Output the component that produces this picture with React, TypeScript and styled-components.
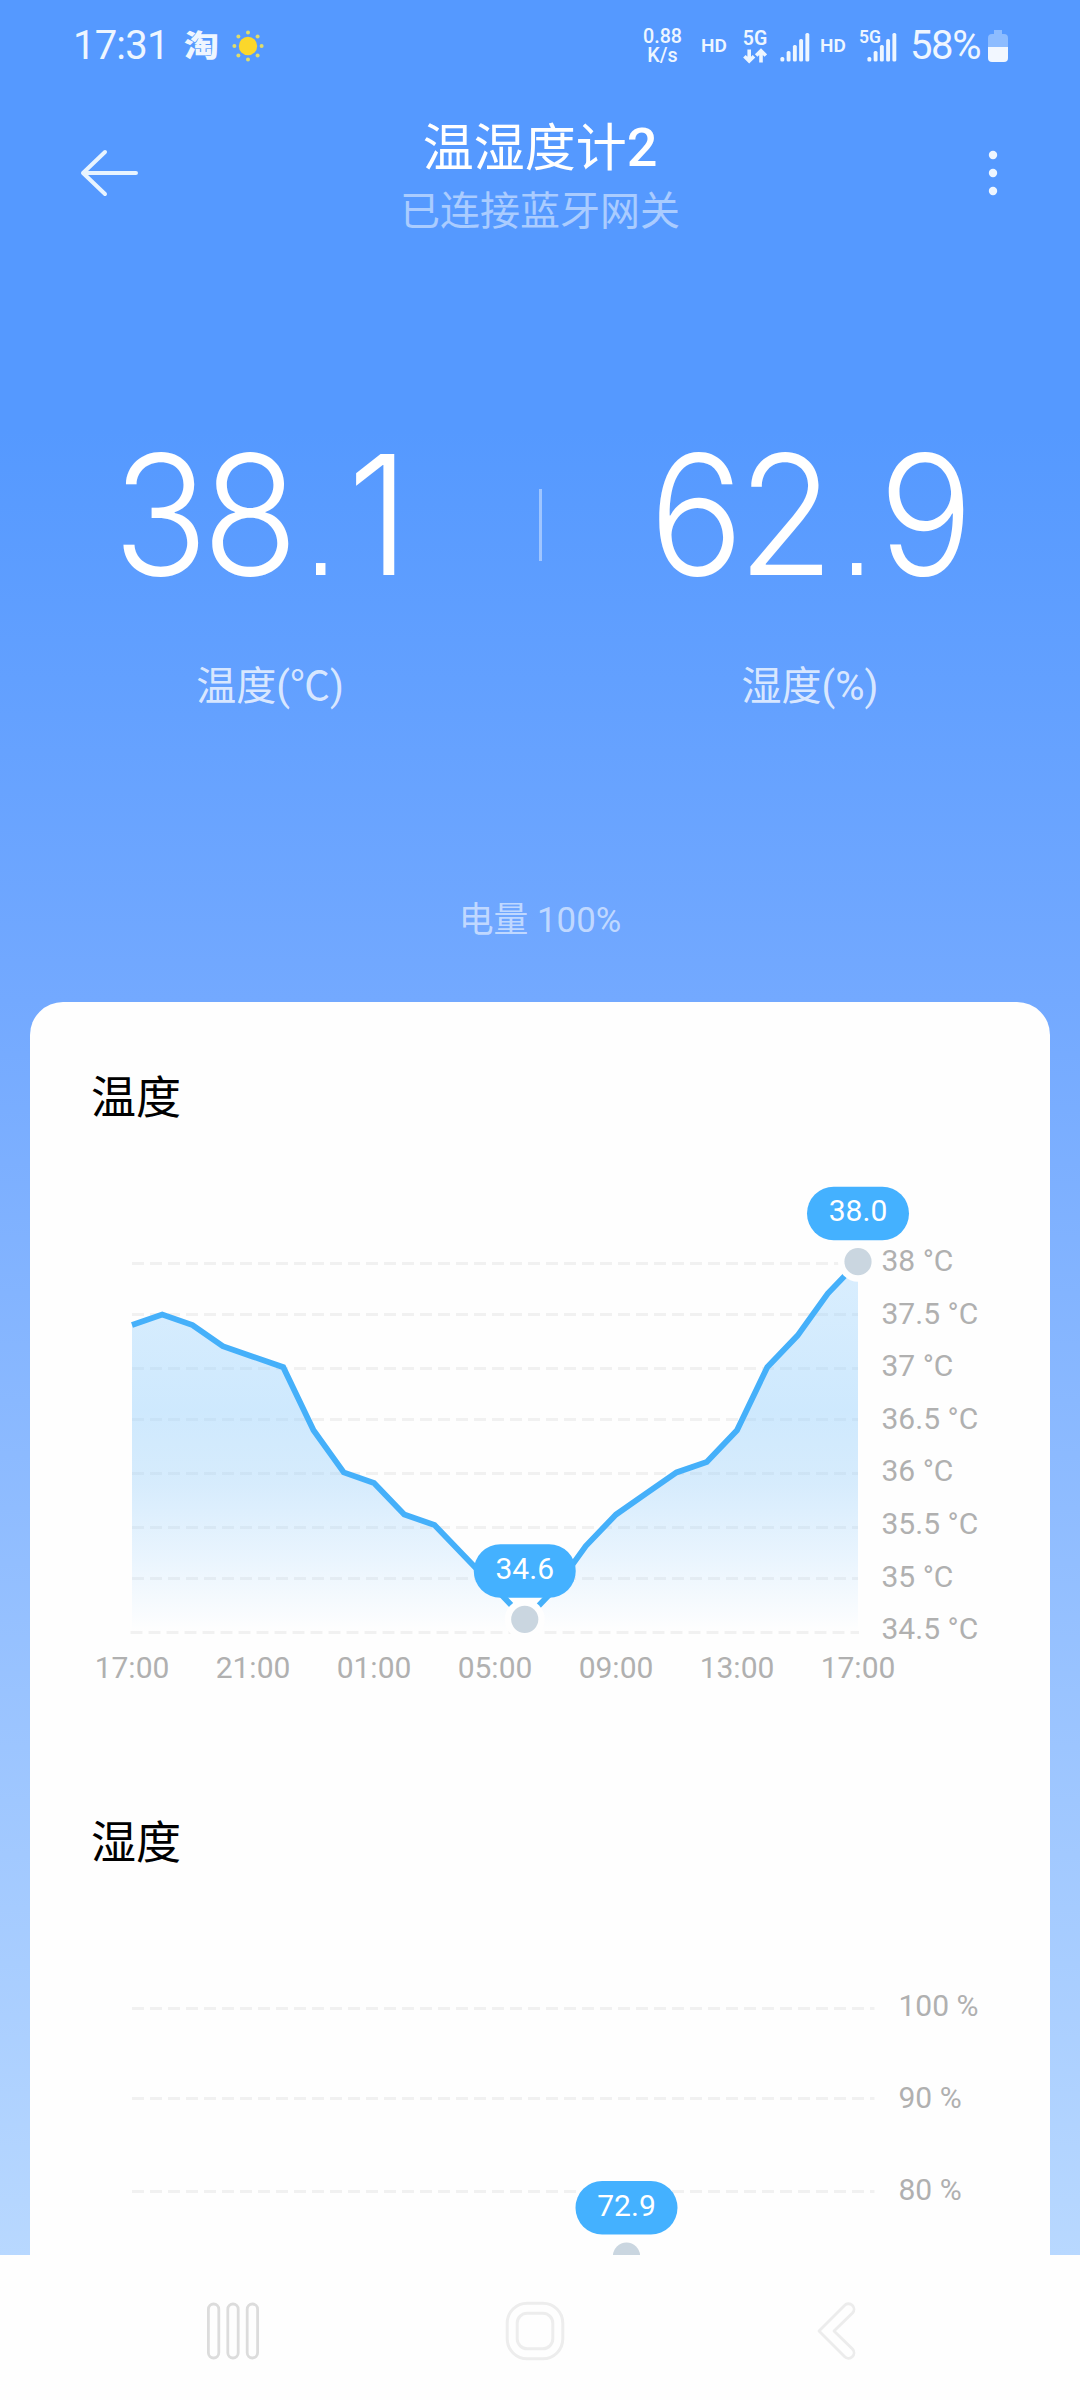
import React from "react";
import styled, { createGlobalStyle } from "styled-components";

const FONT = `Roboto, "Noto Sans CJK SC", sans-serif`;

const GlobalStyle = createGlobalStyle`
  * { box-sizing: border-box; }
  body { margin: 0; background: #fefefe; font-family: ${FONT}; }
`;

const Phone = styled.div`
  width: 1080px;
  height: 2400px;
  display: flex;
  flex-direction: column;
  overflow: hidden;
`;

const Screen = styled.main`
  flex: 1;
  min-height: 0;
  display: flex;
  flex-direction: column;
  background: linear-gradient(180deg, #5599ff 0, #5599ff 430px, #73a9ff 1000px, #b8d8ff 2255px);
`;

/* ---------- status bar ---------- */

const StatusBar = styled.header`
  height: 90px;
  padding: 2px 72px 0 73px;
  display: flex;
  align-items: center;
  justify-content: space-between;
  color: #eef6ff;
`;

const StatusGroup = styled.div`
  display: flex;
  align-items: center;
`;

const Clock = styled.span`
  width: 109px;
  font-size: 40px;
  line-height: 48px;
  letter-spacing: -0.8px;
`;

const ShopGlyph = styled.span`
  width: 36px;
  margin: 0 12px 0 2px;
  font-size: 30px;
  line-height: 36px;
  font-weight: 900;
  transform: scaleX(1.16);
  transform-origin: left center;
`;

const Tiny = styled.span<{ $w: number; $gap: number; $size?: number }>`
  width: ${(p) => p.$w}px;
  margin-right: ${(p) => p.$gap}px;
  font-size: ${(p) => p.$size ?? 19}px;
  line-height: 22px;
  font-weight: 600;
  white-space: nowrap;
`;

const NetSpeed = styled.span`
  width: 42px;
  margin-right: 17.5px;
  padding-top: 1px;
  display: flex;
  flex-direction: column;
  align-items: center;
  font-size: 19.7px;
  line-height: 18.7px;
  font-weight: 500;
`;

const DataLink = styled.span`
  width: 26px;
  margin-right: 12px;
  display: flex;
  flex-direction: column;
  align-items: center;
  font-size: 19.5px;
  line-height: 19px;
  font-weight: 600;
`;

const SignalWrap = styled.span<{ $gap: number }>`
  display: flex;
  margin-right: ${(p) => p.$gap}px;
`;

const SmallNet = styled.span`
  align-self: flex-start;
  width: 21px;
  margin-right: -13px;
  font-size: 17.5px;
  line-height: 15px;
  font-weight: 600;
`;

const Percent = styled.span`
  width: 78px;
  font-size: 40px;
  line-height: 48px;
  letter-spacing: -1.4px;
`;

/* ---------- title bar ---------- */

const TitleBar = styled.div`
  height: 166px;
  padding: 0 76px;
  display: flex;
  align-items: center;
  justify-content: space-between;
`;

const IconButton = styled.button<{ $nudge?: number }>`
  margin: 0 ${(p) => p.$nudge ?? 0}px 0 0;
  padding: 0;
  border: 0;
  background: none;
  display: flex;
`;

const TitleBlock = styled.div`
  align-self: flex-start;
  padding-top: 29px;
  text-align: center;
`;

const Title = styled.h1`
  margin: 0 0 8px;
  font-size: 51px;
  line-height: 60px;
  font-weight: 400;
  color: #fff;
`;

const TitleDigit = styled.span`
  font-size: 54px;
  font-weight: 500;
  line-height: 1;
`;

const Subtitle = styled.p`
  margin: 0;
  font-size: 40px;
  line-height: 50px;
  color: rgba(255, 255, 255, 0.5);
`;

/* ---------- readings ---------- */

const Readings = styled.section`
  margin-top: 158px;
  display: flex;
`;

const Reading = styled.div`
  flex: 1;
  display: flex;
  flex-direction: column;
  align-items: center;
`;

const Value = styled.div`
  height: 200px;
  padding-right: 3px;
  font-family: Inter, Roboto, sans-serif;
  font-size: 167px;
  line-height: 200px;
  font-weight: 260;
  font-kerning: none;
  letter-spacing: -6.4px;
  color: #fff;
  transform: scaleX(0.94);
`;

const Point = styled.span`
  display: inline-block;
  width: 61px;
  margin-right: -7px;
  font-family: "DejaVu Sans", sans-serif;
  font-size: 97px;
  font-weight: 400;
  line-height: 1;
  letter-spacing: 0;
  text-align: center;
`;

const Fraction = styled.span<{ $narrow: boolean }>`
  margin-left: ${(p) => (p.$narrow ? 5 : 0)}px;
  margin-right: ${(p) => (p.$narrow ? 23 : 0)}px;
`;

const ValueLabel = styled.div`
  margin-top: 48px;
  font-size: 40px;
  line-height: 50px;
  color: rgba(255, 255, 255, 0.77);
`;

const Divider = styled.div`
  width: 3px;
  height: 72px;
  margin: 75px -1.5px 0;
  background: rgba(255, 255, 255, 0.42);
`;

const Battery = styled.p`
  margin: 188px 0 0;
  height: 102px;
  font-size: 34.8px;
  line-height: 40px;
  text-align: center;
  color: rgba(255, 255, 255, 0.58);
`;

/* ---------- card ---------- */

const Card = styled.section`
  flex: 1;
  min-height: 0;
  margin: 0 30px;
  padding-top: 67px;
  overflow: hidden;
  background: #fefefe;
  border-radius: 33px 33px 0 0;
`;

const Panel = styled.article`
  margin-bottom: 126px;
`;

const PanelTitle = styled.h2`
  margin: 0 0 -1px;
  padding-left: 61px;
  font-size: 45px;
  line-height: 60px;
  font-weight: 400;
  color: #000;
`;

const ChartSvg = styled.svg`
  display: block;
  font-family: ${FONT};
  font-size: 30px;
`;

const AxisText = styled.text`
  fill: #b0b0b0;
`;

const BubbleText = styled.text`
  fill: #fff;
  text-anchor: middle;
`;

/* ---------- navigation ---------- */

const NavBar = styled.nav`
  height: 145px;
  padding: 7px 224px 0 206px;
  display: flex;
  align-items: center;
  justify-content: space-between;
  background: #fefefe;
`;

function Sun() {
  const rays = Array.from({ length: 8 }, (_, i) => (i * Math.PI) / 4);
  return (
    <svg width="32" height="32" viewBox="-16 -16 32 32">
      <circle r="9.2" fill="#fbd72b" />
      {rays.map((a) => (
        <circle key={a} cx={13.6 * Math.cos(a)} cy={13.6 * Math.sin(a)} r="2" fill="#dfdc6c" />
      ))}
    </svg>
  );
}

function Signal() {
  const heights = [4.5, 10.5, 16.5, 22.5, 28.5];
  return (
    <svg width="30" height="32" viewBox="0 0 30 32">
      {heights.map((h, i) => (
        <rect key={h} x={0.4 + i * 6.25} y={31.5 - h} width="3.9" height={h} rx="1.6" fill="currentColor" />
      ))}
    </svg>
  );
}

function UpDown() {
  return (
    <svg width="24" height="16" viewBox="0 0 24 16" fill="none" stroke="currentColor" strokeWidth="3.6">
      <path d="M6.2 1.5V12M1.4 8.2L6.2 13L11 8.2" />
      <path d="M18 14.5V4M13.2 7.6L18 2.8L22.8 7.6" />
    </svg>
  );
}

function BatteryIcon() {
  return (
    <svg width="20" height="32" viewBox="0 0 20 32">
      <path d="M6 0h8v4h2a4 4 0 0 1 4 4v9H0V8a4 4 0 0 1 4-4h2z" fill="#8dbcff" />
      <path d="M0 17h20v11a4 4 0 0 1-4 4H4a4 4 0 0 1-4-4z" fill="#f2f7ff" />
    </svg>
  );
}

type Mark = { x: number; y: number; text: string };

function Marker({ x, y, text }: Mark) {
  return (
    <g>
      <circle cx={x} cy={y} r="20" fill="#fefefe" />
      <circle cx={x} cy={y} r="13.6" fill="#cad6e0" />
      <rect x={x - 51} y={y - 75} width="102" height="53.5" rx="26.7" fill="#44b1ff" />
      <BubbleText x={x} y={y - 40.5}>{text}</BubbleText>
    </g>
  );
}

function GridLine({ y, to, from = 102 }: { y: number; to: number; from?: number }) {
  return <path d={`M${from} ${y}H${to}`} stroke="#f1f1f1" strokeWidth="3" strokeDasharray="12 6" />;
}

const LEFT = 102;
const RIGHT = 828;
const TOP = 134;
const PER_DEGREE = 105.2;
const temps = [
  37.4, 37.5, 37.4, 37.2, 37.1, 37.0, 36.4, 36.0, 35.9, 35.6, 35.5, 35.2, 34.9, 34.6, 34.9, 35.3, 35.6, 35.8,
  36.0, 36.1, 36.4, 37.0, 37.3, 37.7, 38.0,
];
const tx = (i: number) => LEFT + (i * (RIGHT - LEFT)) / 24;
const ty = (v: number) => TOP + (38 - v) * PER_DEGREE;
const tempGrid = [135.5, 186.5, 240.5, 291.5, 345.5, 399.5, 450.5];
const tempLabels = ["38", "37.5", "37", "36.5", "36", "35.5", "35", "34.5"];
const hours = ["17:00", "21:00", "01:00", "05:00", "09:00", "13:00", "17:00"];

function TemperatureChart() {
  const line = temps.map((v, i) => `${tx(i)},${ty(v).toFixed(1)}`).join(" ");
  return (
    <ChartSvg width="1020" height="560" viewBox="0 0 1020 560">
      <defs>
        <linearGradient id="tempFill" gradientUnits="userSpaceOnUse" x1="0" y1="134" x2="0" y2="504">
          <stop offset="0" stopColor="#96d0fd" stopOpacity="0.35" />
          <stop offset="0.4" stopColor="#96d0fd" stopOpacity="0.46" />
          <stop offset="0.6" stopColor="#96cefa" stopOpacity="0.38" />
          <stop offset="0.8" stopColor="#96cefd" stopOpacity="0.2" />
          <stop offset="1" stopColor="#96d0fd" stopOpacity="0" />
        </linearGradient>
      </defs>
      {tempGrid.map((y) => (
        <GridLine key={y} y={y} to={RIGHT} />
      ))}
      <GridLine y={504.5} from={100.5} to={829} />
      <polygon points={`${LEFT},504 ${line} ${RIGHT},504`} fill="url(#tempFill)" />
      <polyline points={line} fill="none" stroke="#45b0fa" strokeWidth="5.8" />
      {tempLabels.map((t, i) => (
        <AxisText key={t} x="851.5" y={143 + i * 52.6}>{`${t} °C`}</AxisText>
      ))}
      {hours.map((h, i) => (
        <AxisText key={i} x={LEFT + i * 121} y="549.5" textAnchor="middle">{h}</AxisText>
      ))}
      <Marker x={tx(13) - 0.5} y={491.3} text="34.6" />
      <Marker x={RIGHT} y={133.7} text="38.0" />
    </ChartSvg>
  );
}

function HumidityChart() {
  const rows = [
    { label: "100 %", grid: 135.5, text: 143 },
    { label: "90 %", grid: 225.5, text: 234.5 },
    { label: "80 %", grid: 318.5, text: 327 },
  ];
  return (
    <ChartSvg width="1020" height="560" viewBox="0 0 1020 560">
      {rows.map((r) => (
        <g key={r.label}>
          <GridLine y={r.grid} to={844.5} />
          <AxisText x="868.5" y={r.text}>{r.label}</AxisText>
        </g>
      ))}
      <Marker x={596.5} y={383} text="72.9" />
    </ChartSvg>
  );
}

function BigNumber({ value }: { value: string }) {
  const [whole, fraction] = value.split(".");
  return (
    <Value>
      {whole}
      <Point>.</Point>
      <Fraction $narrow={fraction === "1"}>{fraction}</Fraction>
    </Value>
  );
}

export default function App() {
  return (
    <Phone>
      <GlobalStyle />
      <Screen>
        <StatusBar>
          <StatusGroup>
            <Clock>17:31</Clock>
            <ShopGlyph>淘</ShopGlyph>
            <Sun />
          </StatusGroup>
          <StatusGroup>
            <NetSpeed>
              <span>0.88</span>
              <span>K/s</span>
            </NetSpeed>
            <Tiny $w={26} $gap={15}>HD</Tiny>
            <DataLink>
              <span>5G</span>
              <UpDown />
            </DataLink>
            <SignalWrap $gap={10}>
              <Signal />
            </SignalWrap>
            <Tiny $w={26} $gap={13}>HD</Tiny>
            <SignalWrap $gap={13}>
              <SmallNet>5G</SmallNet>
              <Signal />
            </SignalWrap>
            <Percent>58%</Percent>
            <BatteryIcon />
          </StatusGroup>
        </StatusBar>

        <TitleBar>
          <IconButton aria-label="back">
            <svg width="64" height="50" viewBox="0 0 64 50" fill="none" stroke="#e8f4ff" strokeWidth="4" strokeLinecap="round" strokeLinejoin="round">
              <path d="M60 25H7M29 4L7 25L29 46" />
            </svg>
          </IconButton>
          <TitleBlock>
            <Title>
              温湿度计<TitleDigit>2</TitleDigit>
            </Title>
            <Subtitle>已连接蓝牙网关</Subtitle>
          </TitleBlock>
          <IconButton aria-label="more">
            <svg width="64" height="50" viewBox="0 0 64 50" fill="#eef6ff">
              <circle cx="53" cy="7" r="4.2" />
              <circle cx="53" cy="25" r="4.2" />
              <circle cx="53" cy="43" r="4.2" />
            </svg>
          </IconButton>
        </TitleBar>

        <Readings>
          <Reading>
            <BigNumber value="38.1" />
            <ValueLabel>温度(℃)</ValueLabel>
          </Reading>
          <Divider />
          <Reading>
            <BigNumber value="62.9" />
            <ValueLabel>湿度(%)</ValueLabel>
          </Reading>
        </Readings>
        <Battery>电量 100%</Battery>

        <Card>
          <Panel>
            <PanelTitle>温度</PanelTitle>
            <TemperatureChart />
          </Panel>
          <Panel>
            <PanelTitle>湿度</PanelTitle>
            <HumidityChart />
          </Panel>
        </Card>
      </Screen>

      <NavBar>
        <IconButton aria-label="recents">
          <svg width="54" height="60" viewBox="0 0 54 60" fill="none" stroke="#dcdcdc" strokeWidth="2.8">
            <rect x="2.4" y="3" width="10.4" height="54" rx="5.2" />
            <rect x="21.8" y="3" width="10.4" height="54" rx="5.2" />
            <rect x="41.2" y="3" width="10.4" height="54" rx="5.2" />
          </svg>
        </IconButton>
        <IconButton aria-label="home" $nudge={6}>
          <svg width="60" height="60" viewBox="0 0 60 60" fill="none" stroke="#ededed" strokeWidth="3">
            <rect x="2.2" y="2.2" width="55.6" height="55.6" rx="20" />
            <rect x="12.2" y="12.2" width="35.6" height="35.6" rx="10" />
          </svg>
        </IconButton>
        <IconButton aria-label="back">
          <svg width="40" height="60" viewBox="0 0 40 60" fill="none" stroke="#ececec" strokeWidth="2.8" strokeLinejoin="round">
            <path d="M28.5 4.5a5 5 0 0 1 8 7.5L18 30L36.5 48a5 5 0 0 1-8 7.5L3 30Z" />
          </svg>
        </IconButton>
      </NavBar>
    </Phone>
  );
}
